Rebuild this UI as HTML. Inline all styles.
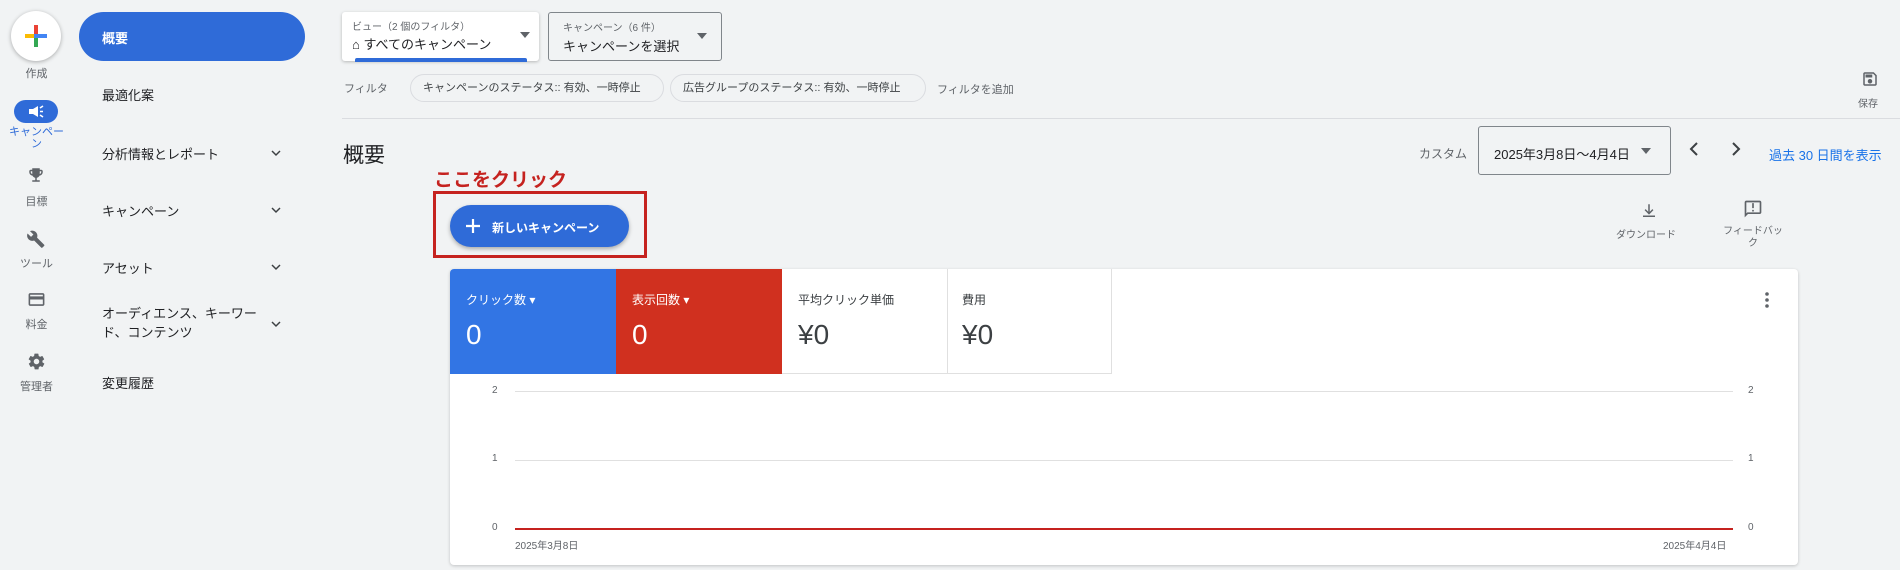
<!DOCTYPE html>
<html><head><meta charset="utf-8">
<style>
*{margin:0;padding:0;box-sizing:border-box}
body{width:1900px;height:570px;background:#f1f3f4;font-family:"Liberation Sans","Noto Sans CJK JP",sans-serif;color:#3c4043;position:relative;overflow:hidden}
.a{position:absolute;white-space:nowrap}
.lbl{font-size:11px;color:#5f6368;text-align:center;width:73px;left:0}
.nav{font-size:13px;color:#202124;left:102px}
.chev{left:268px;width:16px;height:16px}
.ic{fill:#5f6368}
.tile{position:absolute;top:269px;height:105px;width:166px;border-right:1px solid #e0e0e0}
.tile .t{position:absolute;left:16px;top:22px;font-size:12px}
.tile .v{position:absolute;left:16px;top:50px;font-size:28px}
.gl{position:absolute;left:515px;width:1218px;height:1px;background:#e0e0e0}
.yl{position:absolute;font-size:10px;color:#5f6368}
.chip{position:absolute;top:74px;height:28px;border:1px solid #dadce0;border-radius:14px;font-size:11px;line-height:26px;padding:0 12px;white-space:nowrap}
</style></head><body>
<div class="a" style="left:11px;top:11px;width:50px;height:50px;border-radius:50%;background:#fff;box-shadow:0 1px 4px rgba(0,0,0,.3)">
<svg width="50" height="50" viewBox="0 0 50 50"><rect x="23" y="14" width="4" height="10" fill="#ea4335"/><rect x="23" y="26" width="4" height="10" fill="#34a853"/><rect x="14" y="23" width="10" height="4" fill="#fbbc04"/><rect x="26" y="23" width="10" height="4" fill="#4285f4"/><rect x="23" y="23" width="4" height="4" fill="#4285f4"/></svg></div>
<div class="a lbl" style="top:65px">作成</div>
<div class="a" style="left:14px;top:100px;width:44px;height:23px;border-radius:12px;background:#2f6bd8">
<svg width="44" height="23" viewBox="0 0 44 23"><path d="M15 9h4l5-3v11l-5-3h-4z" fill="#fff"/><path d="M26 8l3-2M26 11.5h3M26 15l3 2" stroke="#fff" stroke-width="1.6"/></svg></div>
<div class="a lbl" style="top:126px;color:#2f6bd8;line-height:12px">キャンペー<br>ン</div>
<svg class="a" style="left:27px;top:166px" width="18" height="18" viewBox="0 0 24 24"><path class="ic" d="M19 5h-2V3H7v2H5c-1.1 0-2 .9-2 2v1c0 2.5 1.9 4.6 4.3 4.9.6 1.5 2 2.6 3.7 3V19H7v2h10v-2h-4v-3.1c1.7-.4 3.100-1.5 3.700-3C19.1 12.6 21 10.5 21 8V7c0-1.1-.9-2-2-2zM5 8V7h2v3.8C5.8 10.4 5 9.300 5 8zm14 0c0 1.3-.8 2.4-2 2.8V7h2v1z"/></svg>
<div class="a lbl" style="top:193px">目標</div>
<svg class="a" style="left:27px;top:230px" width="19" height="19" viewBox="0 0 24 24"><path class="ic" d="M21.7 18.6l-9-9c.9-2.3.4-5-1.5-6.9-2-2-5-2.4-7.4-1.3l4.3 4.3-3 3-4.4-4.3C-.4 6.8.1 9.8 2.1 11.8c1.9 1.9 4.6 2.4 6.9 1.5l9 9c.4.4 1 .4 1.4 0l2.3-2.3c.4-.4.4-1 0-1.4z"/></svg>
<div class="a lbl" style="top:255px">ツール</div>
<svg class="a" style="left:27px;top:290px" width="19" height="19" viewBox="0 0 24 24"><path class="ic" d="M20 4H4c-1.1 0-2 .9-2 2v12c0 1.1.9 2 2 2h16c1.1 0 2-.9 2-2V6c0-1.1-.9-2-2-2zm0 14H4v-6h16v6zm0-10H4V6h16v2z"/></svg>
<div class="a lbl" style="top:316px">料金</div>
<svg class="a" style="left:27px;top:352px" width="19" height="19" viewBox="0 0 24 24"><path class="ic" d="M19.4 13c0-.3.1-.6.1-1s0-.7-.1-1l2.1-1.6c.2-.2.2-.4.1-.6l-2-3.5c-.1-.2-.4-.3-.6-.2l-2.5 1c-.5-.4-1.1-.7-1.7-1l-.4-2.6c0-.3-.2-.5-.5-.5h-4c-.3 0-.5.2-.5.4l-.4 2.7c-.6.2-1.1.6-1.7 1l-2.5-1c-.2-.1-.5 0-.6.2l-2 3.5c-.1.2-.1.5.1.6L4.6 11c0 .3-.1.6-.1 1s0 .7.1 1l-2.1 1.6c-.2.2-.2.4-.1.6l2 3.5c.1.2.4.3.6.2l2.5-1c.5.4 1.1.7 1.7 1l.4 2.6c0 .3.2.5.5.5h4c.3 0 .5-.2.5-.4l.4-2.7c.6-.2 1.200-.6 1.700-1l2.5 1c.2.1.5 0 .6-.2l2-3.5c.1-.2.1-.5-.1-.6L19.4 13zM12 15.5c-1.9 0-3.5-1.6-3.5-3.5s1.6-3.5 3.5-3.5 3.5 1.6 3.5 3.5-1.6 3.5-3.5 3.5z"/></svg>
<div class="a lbl" style="top:378px">管理者</div>

<div class="a" style="left:79px;top:12px;width:226px;height:49px;border-radius:25px;background:#2f6bd8"></div>
<div class="a nav" style="top:28px;color:#fff;font-weight:bold">概要</div>
<div class="a nav" style="top:85px">最適化案</div>
<div class="a nav" style="top:144px">分析情報とレポート</div>
<div class="a nav" style="top:201px">キャンペーン</div>
<div class="a nav" style="top:258px">アセット</div>
<div class="a nav" style="top:304px;line-height:19px">オーディエンス、キーワー<br>ド、コンテンツ</div>
<div class="a nav" style="top:373px">変更履歴</div>
<svg class="a chev" style="top:145px" viewBox="0 0 24 24"><path d="M6 9l6 6 6-6" stroke="#3c4043" stroke-width="2.2" fill="none"/></svg>
<svg class="a chev" style="top:202px" viewBox="0 0 24 24"><path d="M6 9l6 6 6-6" stroke="#3c4043" stroke-width="2.2" fill="none"/></svg>
<svg class="a chev" style="top:259px" viewBox="0 0 24 24"><path d="M6 9l6 6 6-6" stroke="#3c4043" stroke-width="2.2" fill="none"/></svg>
<svg class="a chev" style="top:316px" viewBox="0 0 24 24"><path d="M6 9l6 6 6-6" stroke="#3c4043" stroke-width="2.2" fill="none"/></svg>

<div class="a" style="left:342px;top:12px;width:197px;height:49px;background:#fff;border-radius:3px;box-shadow:0 1px 3px rgba(0,0,0,.25)">
<div class="a" style="left:10px;top:6px;font-size:10px;color:#5f6368">ビュー（2 個のフィルタ）</div>
<div class="a" style="left:10px;top:22px;font-size:13px;color:#202124">⌂ すべてのキャンペーン</div>
<svg class="a" style="left:178px;top:20px" width="10" height="6" viewBox="0 0 10 6"><path d="M0 0h10L5 6z" fill="#5f6368"/></svg>
<div class="a" style="left:13px;top:46px;width:172px;height:4px;background:#2f6bd8;border-radius:2px 2px 0 0"></div></div>
<div class="a" style="left:548px;top:12px;width:174px;height:49px;border:1px solid #80868b;border-radius:3px">
<div class="a" style="left:14px;top:6px;font-size:10px;color:#5f6368">キャンペーン（6 件）</div>
<div class="a" style="left:14px;top:23px;font-size:13px;color:#202124">キャンペーンを選択</div>
<svg class="a" style="left:148px;top:20px" width="10" height="6" viewBox="0 0 10 6"><path d="M0 0h10L5 6z" fill="#5f6368"/></svg></div>
<div class="a" style="left:344px;top:80px;font-size:11px;color:#5f6368">フィルタ</div>
<div class="chip" style="left:410px;width:254px">キャンペーンのステータス:: 有効、一時停止</div>
<div class="chip" style="left:670px;width:256px">広告グループのステータス:: 有効、一時停止</div>
<div class="a" style="left:937px;top:81px;font-size:11px;color:#5f6368">フィルタを追加</div>
<svg class="a" style="left:1861px;top:70px" width="18" height="18" viewBox="0 0 24 24"><path class="ic" d="M17 3H5c-1.1 0-2 .9-2 2v14c0 1.1.9 2 2 2h14c1.1 0 2-.9 2-2V7l-4-4zm2 16H5V5h11.2L19 7.8V19zM12 12c-1.7 0-3 1.3-3 3s1.3 3 3 3 3-1.3 3-3-1.3-3-3-3zM6 6h9v4H6z"/></svg>
<div class="a" style="left:1858px;top:95px;font-size:10px;color:#5f6368">保存</div>
<div class="a" style="left:342px;top:118px;width:1558px;height:1px;background:#dadce0"></div>

<div class="a" style="left:343px;top:139px;font-size:21px;color:#202124">概要</div>
<div class="a" style="left:434px;top:165px;font-size:19px;font-weight:bold;color:#c5221f">ここをクリック</div>
<div class="a" style="left:433px;top:191px;width:214px;height:67px;border:3px solid #c5221f"></div>
<div class="a" style="left:450px;top:205px;width:179px;height:42px;border-radius:21px;background:#2f6bd8;box-shadow:0 2px 4px rgba(0,0,0,.3);color:#fff">
<svg class="a" style="left:14px;top:12px" width="18" height="18" viewBox="0 0 18 18"><path d="M9 2v14M2 9h14" stroke="#fff" stroke-width="2.2"/></svg>
<div class="a" style="left:42px;top:14px;font-size:12px;font-weight:bold">新しいキャンペーン</div></div>
<div class="a" style="left:1419px;top:145px;font-size:12px;color:#5f6368">カスタム</div>
<div class="a" style="left:1478px;top:126px;width:193px;height:49px;border:1px solid #80868b;border-radius:3px;font-size:13px;color:#202124;padding:17px 0 0 15px">2025年3月8日〜4月4日<svg style="position:absolute;left:162px;top:21px" width="10" height="6" viewBox="0 0 10 6"><path d="M0 0h10L5 6z" fill="#5f6368"/></svg></div>
<svg class="a" style="left:1686px;top:140px" width="16" height="18" viewBox="0 0 16 18"><path d="M11 3L5 9l6 6" stroke="#3c4043" stroke-width="2" fill="none"/></svg>
<svg class="a" style="left:1728px;top:140px" width="16" height="18" viewBox="0 0 16 18"><path d="M5 3l6 6-6 6" stroke="#3c4043" stroke-width="2" fill="none"/></svg>
<div class="a" style="left:1769px;top:145px;font-size:13px;color:#1a73e8">過去 30 日間を表示</div>
<svg class="a" style="left:1640px;top:202px" width="18" height="18" viewBox="0 0 24 24"><path class="ic" d="M11 3h2v10l3.5-3.5 1.4 1.4L12 16.8l-5.9-5.9 1.4-1.4L11 13zM4 18h16v2H4z"/></svg>
<div class="a" style="left:1616px;top:226px;font-size:10px;color:#5f6368">ダウンロード</div>
<svg class="a" style="left:1743px;top:199px" width="20" height="20" viewBox="0 0 24 24"><path class="ic" d="M20 2H4c-1.1 0-2 .9-2 2v18l4-4h14c1.1 0 2-.9 2-2V4c0-1.1-.9-2-2-2zm0 14H5.2L4 17.2V4h16v12zM11 5h2v6h-2zm0 8h2v2h-2z"/></svg>
<div class="a" style="left:1721px;top:226px;font-size:10px;color:#5f6368;text-align:center;width:64px;line-height:12px">フィードバッ<br>ク</div>

<div class="a" style="left:450px;top:269px;width:1348px;height:296px;background:#fff;border-radius:4px;box-shadow:0 1px 3px rgba(0,0,0,.2);overflow:hidden">
<div class="tile" style="left:0;top:0;background:#3275e4;color:#fff;border:none"><div class="t">クリック数 ▾</div><div class="v">0</div></div>
<div class="tile" style="left:166px;top:0;background:#d0301f;color:#fff;border:none"><div class="t">表示回数 ▾</div><div class="v">0</div></div>
<div class="tile" style="left:332px;top:0;border-bottom:1px solid #e0e0e0"><div class="t">平均クリック単価</div><div class="v">¥0</div></div>
<div class="tile" style="left:496px;top:0;border-bottom:1px solid #e0e0e0"><div class="t">費用</div><div class="v">¥0</div></div>
<svg class="a" style="left:1312px;top:22px" width="10" height="18" viewBox="0 0 10 18"><circle cx="5" cy="3" r="1.8" fill="#5f6368"/><circle cx="5" cy="9" r="1.8" fill="#5f6368"/><circle cx="5" cy="15" r="1.8" fill="#5f6368"/></svg>
</div>
<div class="gl" style="top:391px"></div>
<div class="gl" style="top:460px"></div>
<div class="gl" style="top:528px;height:2px;background:#c5221f"></div>
<div class="yl" style="left:492px;top:385px">2</div><div class="yl" style="left:492px;top:453px">1</div><div class="yl" style="left:492px;top:522px">0</div>
<div class="yl" style="left:1748px;top:385px">2</div><div class="yl" style="left:1748px;top:453px">1</div><div class="yl" style="left:1748px;top:522px">0</div>
<div class="yl" style="left:515px;top:537px">2025年3月8日</div>
<div class="yl" style="left:1663px;top:537px">2025年4月4日</div>
</body></html>
